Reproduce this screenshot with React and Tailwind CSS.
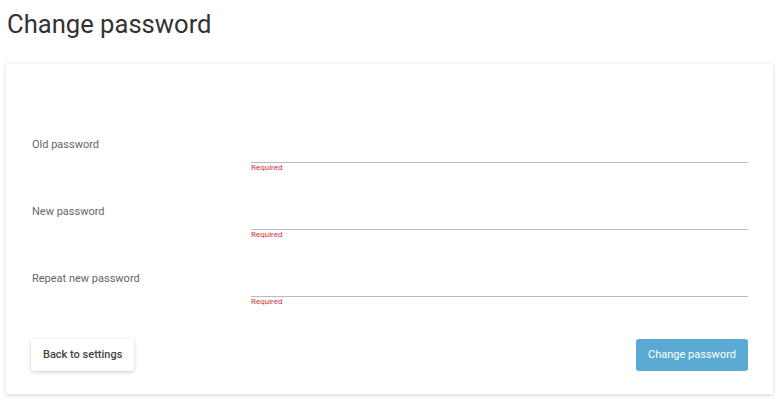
import React from 'react';

const fields = ['Old password', 'New password', 'Repeat new password'];

const App = () => {
    return (
        <div className="min-h-[401px] bg-white pl-[6px] pr-[5px] pt-[8px] font-['Roboto',sans-serif]">
            <h1 className="pl-[1px] text-[25.6px] leading-[32px] font-normal text-[#333]">Change password</h1>

            <div className="mt-[24px] h-[330px] bg-white px-[25px] pt-[59px] shadow-[0_1px_4px_rgba(0,0,0,0.18)]">
                {fields.map((label) => (
                    <div key={label} className="flex mb-[17px]">
                        <div className="w-[220px] pl-[1px] pt-[14px] text-[11px] leading-[16px] text-[#666]">{label}</div>
                        <div className="flex-1">
                            <div className="h-[40px] border-b border-[#bbb]"></div>
                            <div className="text-[8px] leading-[10px] text-[#d32f2f]">Required</div>
                        </div>
                    </div>
                ))}

                <div className="flex justify-between pt-[15px]">
                    <button className="h-[32px] rounded-[3px] bg-white px-[12px] text-[11px] font-medium text-[#444] shadow-[0_1px_4px_rgba(0,0,0,0.2)]">
                        Back to settings
                    </button>
                    <button className="h-[32px] rounded-[3px] bg-[#5aaad4] px-[12px] text-[11px] text-white">
                        Change password
                    </button>
                </div>
            </div>
        </div>
    );
};

export default App;
